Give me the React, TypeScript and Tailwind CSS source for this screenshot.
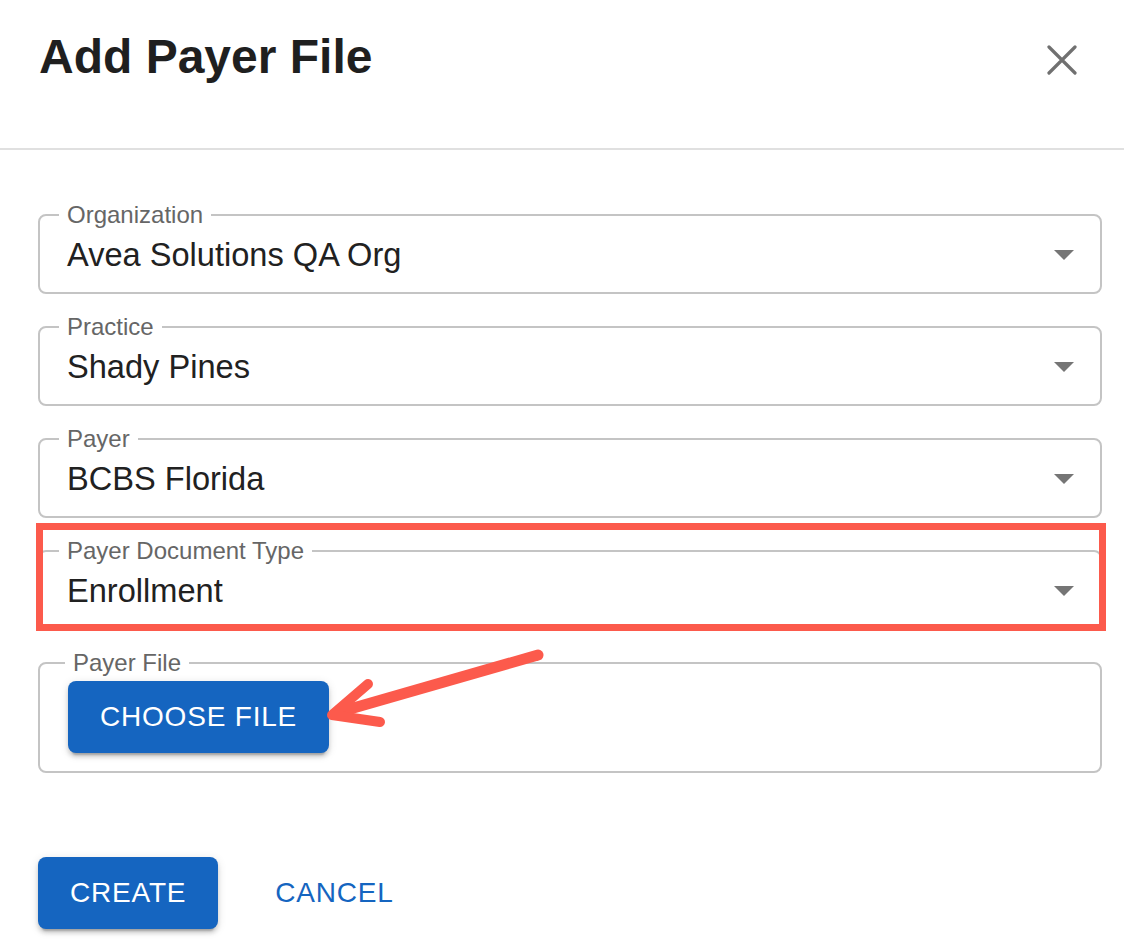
import React from "react";

const font = { fontFamily: '"Liberation Sans", Arial, Helvetica, sans-serif' };

function DropTriangle() {
  return (
    <svg width="20" height="10" viewBox="0 0 20 10" className="shrink-0">
      <path d="M0 0 L20 0 L10 10 Z" fill="#757575" />
    </svg>
  );
}

function SelectField({ label, value, children }: { label: string; value: string; children?: React.ReactNode }) {
  return (
    <div className="relative">
      <fieldset className="border-2 border-[#c4c4c4] rounded-[8px] pl-[19px] pr-[26px]">
        <legend className="px-[8px] text-[24px] leading-[24px] text-[#666666]">{label}</legend>
        <div className="flex items-center justify-between pt-[12px] pb-[21px] pl-[8px]">
          <span className="text-[32.6px] leading-[32px] text-[#212121]">{value}</span>
          <DropTriangle />
        </div>
      </fieldset>
      {children}
    </div>
  );
}

const btnShadow =
  "shadow-[0_6px_2px_-4px_rgba(0,0,0,0.2),0_4px_4px_0_rgba(0,0,0,0.14),0_2px_10px_0_rgba(0,0,0,0.12)]";

export default function App() {
  return (
    <div className="relative w-[1124px] h-[946px] bg-white overflow-hidden" style={font}>
      <div className="flex items-start justify-between h-[150px] border-b-2 border-[#e0e0e0] pt-[33px] pl-[39px] pr-[47px]">
        <h1 className="text-[48px] leading-[48px] font-bold text-[#1f1f1f]">Add Payer File</h1>
        <svg width="30" height="30" viewBox="0 0 30 30" className="mt-[12px]">
          <path d="M2 2 L28 28 M28 2 L2 28" stroke="#707070" strokeWidth="3.2" strokeLinecap="round" />
        </svg>
      </div>

      <div className="flex flex-col gap-[21px] pt-[53px] pl-[38px] pr-[22px]">
        <SelectField label="Organization" value="Avea Solutions QA Org" />
        <SelectField label="Practice" value="Shady Pines" />
        <SelectField label="Payer" value="BCBS Florida" />
        <SelectField label="Payer Document Type" value="Enrollment">
          <div className="absolute -left-[2px] -right-[4px] -top-[16px] -bottom-[1px] border-[7px] border-[#fc5a4c] pointer-events-none" />
        </SelectField>

        <fieldset className="border-2 border-[#c4c4c4] rounded-[8px] pl-[25px] pr-[26px] pb-[18px]">
          <legend className="px-[8px] text-[24px] leading-[24px] text-[#666666]">Payer File</legend>
          <button
            className={`mt-[6px] ml-[3px] h-[72px] px-[32px] rounded-[8px] bg-[#1565c0] text-white text-[28px] tracking-[0.8px] uppercase ${btnShadow}`}
          >
            Choose File
          </button>
        </fieldset>
      </div>

      <div className="flex items-center pl-[38px] mt-[84px]">
        <button
          className={`h-[72px] px-[32px] rounded-[8px] bg-[#1565c0] text-white text-[28px] tracking-[0.8px] uppercase ${btnShadow}`}
        >
          Create
        </button>
        <button className="ml-[41px] h-[72px] px-[16px] text-[#1565c0] text-[28px] tracking-[0.8px] uppercase">
          Cancel
        </button>
      </div>

      <svg
        className="absolute left-[320px] top-[640px] pointer-events-none"
        width="240"
        height="100"
        viewBox="0 0 240 100"
      >
        <path d="M218 15 L16 73" stroke="#fc5a4c" strokeWidth="11" strokeLinecap="round" />
        <path
          d="M48 44 L12 75 L60 82"
          stroke="#fc5a4c"
          strokeWidth="10"
          strokeLinecap="round"
          strokeLinejoin="round"
          fill="none"
        />
      </svg>
    </div>
  );
}
